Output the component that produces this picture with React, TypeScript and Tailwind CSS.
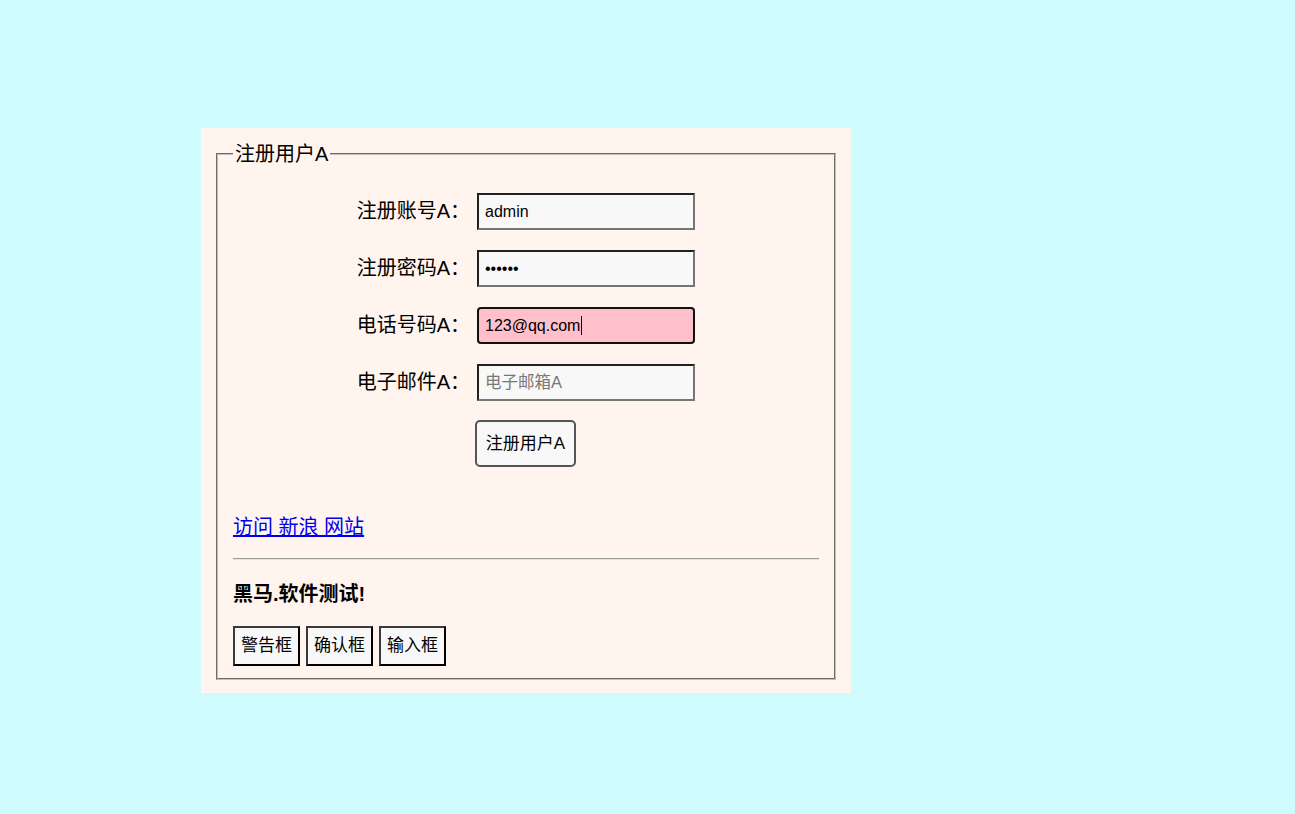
import React from "react";

const CN = "font-['Liberation_Sans','Noto_Sans_CJK_SC',sans-serif]";

const rows = [
  { label: "注册账号A：", kind: "text" },
  { label: "注册密码A：", kind: "password" },
  { label: "电话号码A：", kind: "focus" },
  { label: "电子邮件A：", kind: "email" },
];

function Field({ kind }: { kind: string }) {
  const base =
    "w-[218px] h-[37px] border-2 border-[#767676] [border-style:inset] bg-[#f8f8f8] px-[6px] text-[16px] text-black outline-none";
  if (kind === "focus") {
    return (
      <div className="w-[218px] h-[37px] border-2 border-[#111] rounded-[4px] bg-[#ffc0cb] px-[6px] flex items-center text-[16px] text-black">
        <span>123@qq.com</span>
        <span className="w-px h-[19px] bg-black ml-[1px]" />
      </div>
    );
  }
  if (kind === "password") {
    return <input type="password" readOnly value="123456" className={base} />;
  }
  if (kind === "email") {
    return (
      <input
        type="text"
        readOnly
        placeholder="电子邮箱A"
        className={base + " placeholder:text-[#777] placeholder:text-[16.5px]"}
      />
    );
  }
  return <input type="text" readOnly value="admin" className={base} />;
}

export default function App() {
  return (
    <div className={`min-h-screen bg-[#cffafe] pt-[128px] pl-[201px] ${CN}`}>
      <div className="w-[650px] bg-[#fff4ee] pt-[15px] px-[15px] pb-[13px]">
        <fieldset className="border-2 border-[#c0c0c0] [border-style:groove] px-[15px] pb-[12px]">
          <legend className="px-[2px] text-[20px] leading-[22px] text-black">注册用户A</legend>

          <div className="mt-[28px] grid grid-cols-[237px_218px] gap-x-[7px] gap-y-[20px]">
            {rows.map((r) => (
              <React.Fragment key={r.label}>
                <div className="flex items-center justify-end pb-[2px] text-[20px] text-black whitespace-nowrap">
                  {r.label}
                </div>
                <Field kind={r.kind} />
              </React.Fragment>
            ))}
          </div>

          <div className="mt-[19px] pl-[242px]">
            <button className="w-[101px] h-[47px] border-2 border-[#555] rounded-[5px] bg-[#f8f8f8] text-[17px] text-black">
              注册用户A
            </button>
          </div>

          <div className="mt-[47px] leading-[26px] text-[20px]">
            <a href="#" className="text-[#0000ee] underline">
              访问 新浪 网站
            </a>
          </div>

          <div className="mt-[18px] h-[2px] border-t border-[#9a9a9a] border-b border-b-[#e4e4e4]" />

          <div className="mt-[21px] leading-[26px] text-[20px] font-bold text-black">黑马.软件测试!</div>

          <div className="mt-[19px] flex gap-[6px]">
            {["警告框", "确认框", "输入框"].map((t) => (
              <button
                key={t}
                className="h-[40px] w-[67px] border-2 border-[#3a3a3a] [border-style:outset] bg-[#f8f8f8] text-[17px] text-black"
              >
                {t}
              </button>
            ))}
          </div>
        </fieldset>
      </div>
    </div>
  );
}
